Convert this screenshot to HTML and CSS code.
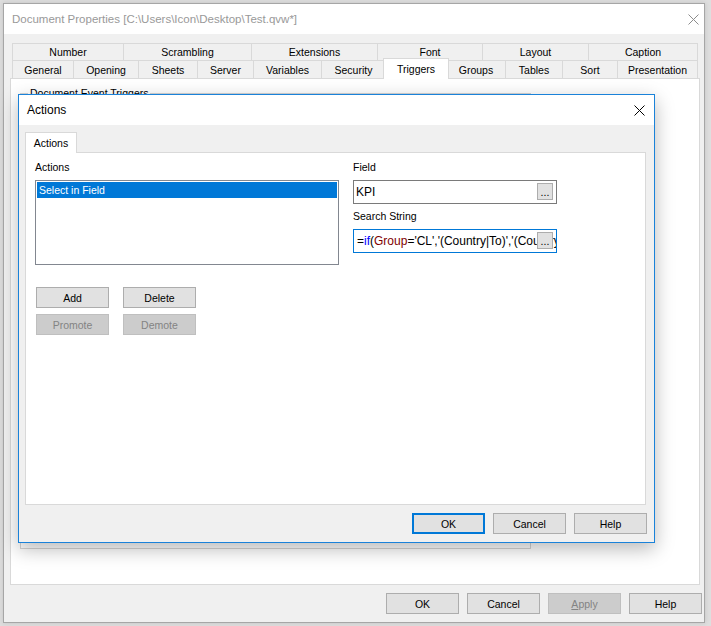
FILE: index.html
```html
<!DOCTYPE html>
<html>
<head>
<meta charset="utf-8">
<link rel="stylesheet" href="styles.css">
</head>
<body>
<div class="window">
  <div class="titlebar">
    <span class="title">Document Properties [C:\Users\Icon\Desktop\Test.qvw*]</span>
    <svg class="close-x" width="11" height="11" viewBox="0 0 11 11"><path d="M0.5 0.5L10.5 10.5M10.5 0.5L0.5 10.5" stroke="#8c8c8c" stroke-width="1" fill="none"/></svg>
  </div>
  <div class="win-body">
    <div class="tabs">
      <div class="tabrow row1">
        <div class="tab w-number">Number</div>
        <div class="tab w-scrambling">Scrambling</div>
        <div class="tab w-extensions">Extensions</div>
        <div class="tab w-font">Font</div>
        <div class="tab w-layout">Layout</div>
        <div class="tab w-caption">Caption</div>
      </div>
      <div class="tabrow row2">
        <div class="tab w-general">General</div>
        <div class="tab w-opening">Opening</div>
        <div class="tab w-sheets">Sheets</div>
        <div class="tab w-server">Server</div>
        <div class="tab w-variables">Variables</div>
        <div class="tab w-security">Security</div>
        <div class="tab w-triggers sel">Triggers</div>
        <div class="tab w-groups">Groups</div>
        <div class="tab w-tables">Tables</div>
        <div class="tab w-sort">Sort</div>
        <div class="tab w-presentation">Presentation</div>
      </div>
    </div>
    <div class="panel">
      <fieldset class="group"><legend>Document Event Triggers</legend></fieldset>
    </div>
    <div class="buttons">
      <button class="btn">OK</button>
      <button class="btn">Cancel</button>
      <button class="btn disabled"><u>A</u>pply</button>
      <button class="btn">Help</button>
    </div>
  </div>

  <div class="dialog">
    <div class="dlg-title">
      <span class="dlg-title-text">Actions</span>
      <svg class="close-x" width="11" height="11" viewBox="0 0 11 11"><path d="M0.5 0.5L10.5 10.5M10.5 0.5L0.5 10.5" stroke="#000" stroke-width="1" fill="none"/></svg>
    </div>
    <div class="dlg-content">
      <div class="dlg-tab">Actions</div>
      <div class="dlg-panel">
        <div class="col">
          <div class="label">Actions</div>
          <div class="listbox">
            <div class="lb-item">Select in Field</div>
          </div>
          <div class="btnrow first">
            <button class="btn">Add</button>
            <button class="btn">Delete</button>
          </div>
          <div class="btnrow">
            <button class="btn disabled">Promote</button>
            <button class="btn disabled">Demote</button>
          </div>
        </div>
        <div class="col">
          <div class="label">Field</div>
          <div class="input">KPI<span class="ell">...</span></div>
          <div class="label second">Search String</div>
          <div class="input focus">=<span class="kw">if</span>(<span class="fld">Group</span>='CL','(Country|To)','(Country)')<span class="ell">...</span></div>
        </div>
      </div>
      <div class="dlg-buttons">
        <button class="btn default">OK</button>
        <button class="btn">Cancel</button>
        <button class="btn">Help</button>
      </div>
    </div>
  </div>
</div>
</body>
</html>
```
FILE: styles.css
```css
* { box-sizing: border-box; }
html, body { margin: 0; padding: 0; }
body {
  background: #dedede;
  font-family: "Liberation Sans", Arial, sans-serif;
  font-size: 10.5px;
  color: #000;
  width: 711px;
  height: 626px;
  overflow: hidden;
}
.window {
  position: relative;
  margin: 3px 0 0 3px;
  width: 702px;
  height: 620px;
  border: 1px solid #a6a6a6;
  background: #f0f0f0;
  box-shadow: 0 0 5px rgba(0,0,0,0.12);
}
.titlebar {
  height: 30px;
  background: #fff;
  display: flex;
  align-items: center;
  justify-content: space-between;
  padding: 0 5px 0 8px;
}
.title { font-size: 11.5px; color: #999; }
.close-x { display: block; }
.win-body { padding: 9px 4px 0 6px; }
.tabs { margin-left: 2px; }
.tabrow { display: flex; }
.row1 { height: 17px; }
.row2 { height: 18px; align-items: flex-end; }
.tab {
  height: 100%;
  border: 1px solid #d9d9d9;
  border-bottom: 0;
  margin-right: -1px;
  background: #f0f0f0;
  display: flex;
  align-items: center;
  justify-content: center;
  white-space: nowrap;
}
.row2 .tab { height: 18px; }
.row2 .tab.sel {
  height: 21px;
  margin: 0 -3px -1px -2px;
  background: #fff;
  position: relative;
  z-index: 2;
  padding-bottom: 1px;
}
.w-number { width: 112px; }
.w-scrambling { width: 129px; }
.w-extensions { width: 127px; }
.w-font { width: 106px; }
.w-layout { width: 107px; }
.w-caption { width: 110px; }
.w-general { width: 62px; }
.w-opening { width: 66px; }
.w-sheets { width: 60px; }
.w-server { width: 57px; }
.w-variables { width: 69px; }
.w-security { width: 65px; }
.w-triggers { width: 66px; }
.w-groups { width: 60px; }
.w-tables { width: 58px; }
.w-sort { width: 56px; }
.w-presentation { width: 81px; }

.panel {
  width: 690px;
  height: 507px;
  border: 1px solid #d9d9d9;
  background: #fff;
  padding: 8px 9px;
}
.group {
  margin: 0;
  padding: 0;
  min-width: 0;
  width: 511px;
  height: 462px;
  border: 1px solid #d5d5d5;
}
.group legend {
  margin-left: 7px;
  padding: 0 2px;
  font-size: 10.5px;
  line-height: 13px;
}
.buttons {
  display: flex;
  justify-content: flex-end;
  gap: 8px;
  margin: 8px -2px 0 0;
}
.btn {
  width: 73px;
  height: 21px;
  padding: 0;
  margin: 0;
  border: 1px solid #adadad;
  background: #e1e1e1;
  font-family: inherit;
  font-size: 10.5px;
  color: #000;
  display: flex;
  align-items: center;
  justify-content: center;
}
.btn.disabled {
  background: #cccccc;
  border-color: #bfbfbf;
  color: #838383;
}
.btn.default { border: 2px solid #0078d7; }

.dialog {
  position: absolute;
  left: 14px;
  top: 90px;
  width: 637px;
  height: 449px;
  border: 1px solid #1a82d9;
  background: #f0f0f0;
  box-shadow: 0 6px 18px rgba(0,0,0,0.28);
  z-index: 5;
}
.dlg-title {
  height: 30px;
  background: #fff;
  display: flex;
  align-items: center;
  justify-content: space-between;
  padding: 0 9px 0 8px;
}
.dlg-title-text { font-size: 12px; }
.dlg-content { padding: 7px 8px 0 6px; }
.dlg-tab {
  width: 52px;
  height: 21px;
  margin-bottom: -1px;
  border: 1px solid #d9d9d9;
  border-bottom: 0;
  background: #fff;
  position: relative;
  z-index: 1;
  display: flex;
  align-items: center;
  justify-content: center;
}
.dlg-panel {
  width: 621px;
  height: 353px;
  border: 1px solid #d9d9d9;
  background: #fff;
  padding: 8px 9px;
  display: grid;
  grid-template-columns: 304px 204px;
  column-gap: 14px;
  align-content: start;
}
.label { line-height: 13px; margin-bottom: 6px; }
.label.second { margin-top: 6px; }
.listbox {
  height: 85px;
  border: 1px solid #828790;
  background: #fff;
}
.lb-item {
  margin: 1px;
  height: 16px;
  line-height: 16px;
  padding-left: 2px;
  background: #0078d7;
  color: #fff;
}
.btnrow { display: flex; gap: 14px; margin: 6px 0 0 1px; }
.btnrow.first { margin-top: 22px; }
.input {
  position: relative;
  height: 24px;
  border: 1px solid #7a7a7a;
  background: #fff;
  font-size: 12px;
  line-height: 22px;
  padding-left: 2px;
  white-space: nowrap;
  overflow: hidden;
}
.input.focus { border-color: #0078d7; padding-left: 3px; }
.kw { color: #0000ff; }
.fld { color: #800000; }
.ell {
  position: absolute;
  right: 3px;
  top: 2px;
  width: 16px;
  height: 17px;
  border: 1px solid #adadad;
  background: #e1e1e1;
  font-size: 10.5px;
  line-height: 17px;
  text-align: center;
  color: #000;
}
.dlg-buttons {
  display: flex;
  justify-content: flex-end;
  gap: 8px;
  margin: 8px -1px 0 0;
}
```
